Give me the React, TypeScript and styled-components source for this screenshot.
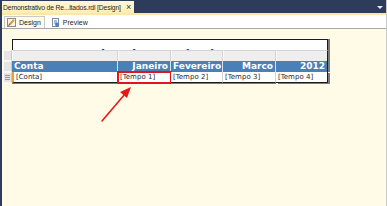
import React from 'react';
import styled, { createGlobalStyle } from 'styled-components';

const GlobalStyle = createGlobalStyle`
  html, body {
    margin: 0;
    padding: 0;
    background: #fffbe6;
  }
  * {
    box-sizing: border-box;
  }
`

const Window = styled.div`
  width: 387px;
  height: 206px;
  display: flex;
  flex-direction: column;
  border-left: 2px solid #2d3c5a;
  border-right: 1px solid #c8c8c8;
  overflow: hidden;
  font-family: "DejaVu Sans", Verdana, sans-serif;
`

const DocStrip = styled.div`
  height: 13px;
  background: #2d3c5a;
  display: flex;
  align-items: flex-end;
  justify-content: space-between;
  padding-right: 3px;
`

const DocTab = styled.div`
  height: 12px;
  width: 132px;
  background: linear-gradient(#fff7dc, #ffedb5);
  display: flex;
  align-items: center;
  justify-content: space-between;
  padding: 0 3px 0 1px;
  font-family: "Liberation Sans", Arial, sans-serif;
  font-size: 6.8px;
  letter-spacing: -0.15px;
  color: #1e1e1e;
  white-space: nowrap;
`

const CloseMark = styled.span`
  font-size: 9px;
  color: #333;
`

const DropArrow = styled.span`
  width: 0;
  height: 0;
  border-left: 3px solid transparent;
  border-right: 3px solid transparent;
  border-top: 3px solid #e8ecf4;
  margin-bottom: 4px;
`

const Accent = styled.div`
  height: 2px;
  background: #ffe8a6;
`

const ViewBar = styled.div`
  height: 14px;
  background: #fff;
  display: flex;
  align-items: flex-end;
  gap: 3px;
  padding-left: 2px;
  border-bottom: 1px solid #a8a8a8;
`

const ViewTab = styled.div<{ $active?: boolean }>`
  height: 12px;
  display: flex;
  align-items: center;
  gap: 3px;
  padding: 0 3px 0 2px;
  font-family: "Liberation Sans", Arial, sans-serif;
  font-size: 7px;
  color: #1e1e1e;
  background: ${p => (p.$active ? '#fffbe6' : 'transparent')};
  border: 1px solid ${p => (p.$active ? '#c9c9c9' : 'transparent')};
  border-bottom: none;
`

const Canvas = styled.div`
  flex: 1;
  position: relative;
  background: #fffbe6;
  padding: 10px 0 0 1px;
`

const Report = styled.div`
  display: grid;
  grid-template-columns: 9px 106px 53px 52px 53px 52px;
  grid-template-rows: 11px 11px 11px 11px;
  width: max-content;
`

const TitleCell = styled.div`
  grid-column: 2 / 7;
  background: #fff;
  border: 1px solid #1c1c1c;
  border-bottom: none;
  box-shadow: 2px 0 0 #7a7a7a;
  overflow: hidden;
  position: relative;
`

const TitleText = styled.span`
  position: absolute;
  left: 1px;
  top: 7px;
  font-family: "DejaVu Sans", Verdana, sans-serif;
  font-weight: bold;
  font-size: 13px;
  line-height: 16px;
  color: #1f4e8c;
  white-space: nowrap;
`

const Ruler = styled.div`
  background: #e4e4e4;
  border: 1px solid #f8f8f8;
  border-right-color: #c8c8c8;
  display: flex;
  align-items: center;
  justify-content: center;
`

const Grip = styled.div`
  width: 5px;
  height: 5px;
  border-top: 1px solid #9a9a9a;
  border-bottom: 1px solid #9a9a9a;
  position: relative;
  &::after {
    content: '';
    position: absolute;
    left: 0;
    right: 0;
    top: 1px;
    border-top: 1px solid #9a9a9a;
  }
`

const HandleCell = styled.div<{ $last?: boolean }>`
  background: #eeeeee;
  border-left: 1px solid #fafafa;
  border-right: 1px solid ${p => (p.$last ? '#1c1c1c' : '#d4d4d4')};
  border-top: 1px solid #d4d4d4;
  box-shadow: ${p => (p.$last ? '2px 0 0 #7a7a7a' : 'none')};
`

const HeadCell = styled.div<{ $left?: boolean; $last?: boolean }>`
  background: #4a80b8;
  color: #fff;
  font-weight: bold;
  font-size: 9px;
  line-height: 11px;
  padding: 0 2px;
  text-align: ${p => (p.$left ? 'left' : 'right')};
  border-right: 1px solid ${p => (p.$last ? '#1c1c1c' : '#d8e2ee')};
  box-shadow: ${p => (p.$last ? '2px 0 0 #7a7a7a' : 'none')};
  white-space: nowrap;
`

const DataCell = styled.div<{ $first?: boolean; $last?: boolean; $marked?: boolean }>`
  background: #fff;
  color: #2a2a2a;
  font-size: 7px;
  line-height: 10px;
  padding-left: 2px;
  border-right: 1px solid ${p => (p.$last ? '#1c1c1c' : '#d4d4d4')};
  border-bottom: 1px solid #1c1c1c;
  border-left: ${p => (p.$first ? '2px solid #f0a030' : 'none')};
  box-shadow: ${p => (p.$last ? '2px 1px 0 #7a7a7a' : '0 1px 0 #7a7a7a')};
  outline: ${p => (p.$marked ? '2px solid #e4141c' : 'none')};
  outline-offset: -1px;
  position: relative;
  white-space: nowrap;
`

const Arrow = styled.svg`
  position: absolute;
  left: 96px;
  top: 55px;
`

const months = ['Janeiro', 'Fevereiro', 'Marco', '2012'];

const App: React.FC = () => {
    return (
        <>
            <GlobalStyle />
            <Window>
                <DocStrip>
                    <DocTab>
                        <span>Demonstrativo de Re...ltados.rdl [Design]</span>
                        <CloseMark>×</CloseMark>
                    </DocTab>
                    <DropArrow />
                </DocStrip>
                <Accent />
                <ViewBar>
                    <ViewTab $active>
                        <svg width="9" height="9" viewBox="0 0 9 9">
                            <rect x="0.5" y="0.5" width="8" height="8" fill="#f4f4f4" stroke="#8a8a8a" />
                            <path d="M2 7 L7 2" stroke="#d89a20" strokeWidth="2" />
                            <path d="M1.5 7.5 L2.5 6.5" stroke="#333" strokeWidth="1" />
                        </svg>
                        Design
                    </ViewTab>
                    <ViewTab>
                        <svg width="9" height="9" viewBox="0 0 9 9">
                            <rect x="1.5" y="0.5" width="6" height="8" fill="#fff" stroke="#7a8aa8" />
                            <path d="M3 3h3M3 5h3" stroke="#5a7ab0" />
                            <circle cx="6" cy="6.5" r="2" fill="#4a80c8" />
                        </svg>
                        Preview
                    </ViewTab>
                </ViewBar>
                <Canvas>
                    <Report>
                        <div />
                        <TitleCell>
                            <TitleText>Demonstrativo de Resultado</TitleText>
                        </TitleCell>

                        <Ruler />
                        <HandleCell />
                        {months.map((m, i) => (
                            <HandleCell key={m} $last={i === months.length - 1} />
                        ))}

                        <Ruler />
                        <HeadCell $left>Conta</HeadCell>
                        {months.map((m, i) => (
                            <HeadCell key={m} $last={i === months.length - 1}>{m}</HeadCell>
                        ))}

                        <Ruler><Grip /></Ruler>
                        <DataCell $first>[Conta]</DataCell>
                        {months.map((m, i) => (
                            <DataCell key={m} $marked={i === 0} $last={i === months.length - 1}>
                                [Tempo {i + 1}]
                            </DataCell>
                        ))}
                    </Report>
                    <Arrow width="40" height="40" viewBox="0 0 40 40">
                        <path d="M4 37 L27 10" stroke="#e81818" strokeWidth="1.6" strokeLinecap="round" />
                        <polygon points="33,3 22,8 29,14" fill="#e81818" />
                    </Arrow>
                </Canvas>
            </Window>
        </>
    );
};

export default App
